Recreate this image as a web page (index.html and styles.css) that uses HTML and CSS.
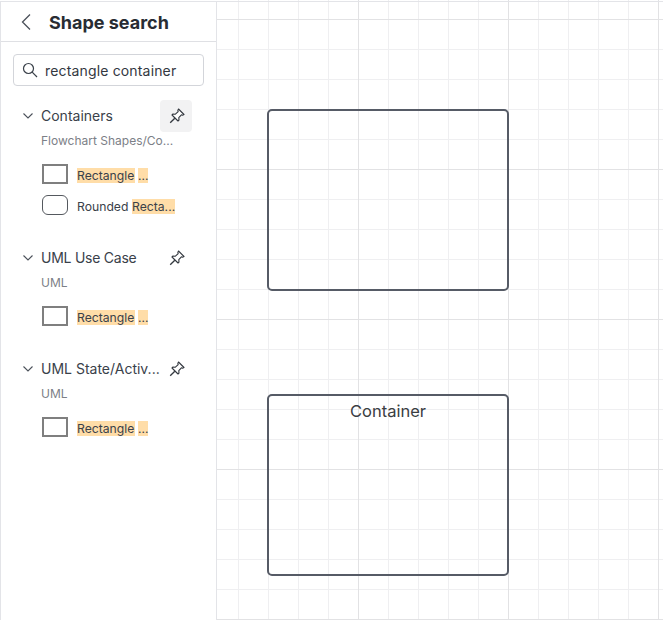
FILE: index.html
```html
<!DOCTYPE html>
<html lang="en">
<head>
<meta charset="utf-8">
<title>Shape search</title>
<link rel="stylesheet" href="styles.css">
</head>
<body>
<div class="app">
  <aside class="panel">
    <header class="panel-head">
      <svg class="back" width="12" height="18" viewBox="0 0 12 18"><path d="M10 1.500L2.500 9L10 16.500" /></svg>
      <h1>Shape search</h1>
    </header>
    <div class="search">
      <svg class="search-icon" width="16" height="16" viewBox="0 0 16 16"><circle cx="6.500" cy="6.500" r="5"/><path d="M10.200 10.200L15 15"/></svg>
      <span class="search-text">rectangle container</span>
    </div>
    <section class="group first">
      <div class="group-head">
        <svg class="chev" width="10" height="6" viewBox="0 0 10 6"><path d="M.5.500L5 5L9.500.500"/></svg>
        <span class="group-title">Containers</span>
        <span class="pin active"><svg width="16" height="16" viewBox="0 0 16 16"><path class="pin-body" d="M9.500 1L15 6.500L13.600 7.200L12.400 6.800L9.800 9.600L10 12L9 13L3 7L4 6L6.400 6.200L9.200 3.600L8.800 2.400z"/><path class="pin-stem" d="M5.800 10.200L1.200 14.800"/></svg></span>
      </div>
      <div class="group-sub">Flowchart Shapes/Co...</div>
      <div class="item"><span class="thumb"></span><span class="label"><mark class="word">Rectangle</mark><mark class="tail">...</mark></span></div>
      <div class="item"><span class="thumb round"></span><span class="label"><span class="lead">Rounded</span><mark>Recta...</mark></span></div>
    </section>
    <section class="group">
      <div class="group-head">
        <svg class="chev" width="10" height="6" viewBox="0 0 10 6"><path d="M.5.500L5 5L9.500.500"/></svg>
        <span class="group-title tight">UML Use Case</span>
        <span class="pin"><svg width="16" height="16" viewBox="0 0 16 16"><path class="pin-body" d="M9.500 1L15 6.500L13.600 7.200L12.400 6.800L9.800 9.600L10 12L9 13L3 7L4 6L6.400 6.200L9.200 3.600L8.800 2.400z"/><path class="pin-stem" d="M5.800 10.200L1.200 14.800"/></svg></span>
      </div>
      <div class="group-sub">UML</div>
      <div class="item"><span class="thumb"></span><span class="label"><mark class="word">Rectangle</mark><mark class="tail">...</mark></span></div>
    </section>
    <section class="group">
      <div class="group-head">
        <svg class="chev" width="10" height="6" viewBox="0 0 10 6"><path d="M.5.500L5 5L9.500.500"/></svg>
        <span class="group-title">UML State/Activ...</span>
        <span class="pin"><svg width="16" height="16" viewBox="0 0 16 16"><path class="pin-body" d="M9.500 1L15 6.500L13.600 7.200L12.400 6.800L9.800 9.600L10 12L9 13L3 7L4 6L6.400 6.200L9.200 3.600L8.800 2.400z"/><path class="pin-stem" d="M5.800 10.200L1.200 14.800"/></svg></span>
      </div>
      <div class="group-sub">UML</div>
      <div class="item"><span class="thumb"></span><span class="label"><mark class="word">Rectangle</mark><mark class="tail">...</mark></span></div>
    </section>
  </aside>
  <main class="canvas">
    <div class="shape shape-a"></div>
    <div class="shape shape-b"><span class="shape-title">Container</span></div>
  </main>
</div>
</body>
</html>
```
FILE: styles.css
```css
* { box-sizing: border-box; }
html, body { margin: 0; height: 100%; overflow: hidden; background: #fff; }
body { font-family: Inter, "Liberation Sans", sans-serif; color: #3a414a; }

.app { display: flex; width: 663px; height: 620px; }

.panel {
  flex: 0 0 217px;
  height: 619px;
  margin-top: 1px;
  background: #fff;
  border-left: 1px solid #e3e4e8;
  border-top: 1px solid #e3e4e8;
  border-right: 1px solid #e3e4e8;
}

.panel-head {
  display: flex;
  align-items: center;
  height: 40px;
  border-bottom: 1px solid #dfe0e4;
  padding-left: 19px;
}
.back { fill: none; stroke: #4b515a; stroke-width: 1.300; margin-right: 17px; }
.panel-head h1 { margin: 2px 0 0; font-size: 18px; font-weight: 700; color: #282c33; }

.search {
  display: flex;
  align-items: center;
  height: 32px;
  margin: 12px 12px 0 12px;
  border: 1px solid #d3d5da;
  border-radius: 4px;
  padding-left: 8px;
}
.search-icon { fill: none; stroke: #3a414a; stroke-width: 1.200; margin-right: 7px; flex: none; }
.search-text { font-size: 14px; letter-spacing: .16px; color: #33383f; }

.group { padding-left: 22px; margin-top: 20px; }
.group.first { margin-top: 14px; }

.group-head { display: flex; align-items: center; height: 32px; }
.chev { fill: none; stroke: #4b515a; stroke-width: 1.100; margin-right: 8px; flex: none; }
.group-title { font-size: 14px; color: #3a414a; width: 119px; white-space: nowrap; padding-bottom: 2px; }
.group-title.tight { letter-spacing: -.25px; }
.pin {
  display: flex;
  align-items: center;
  justify-content: center;
  width: 32px;
  height: 32px;
  padding-left: 1px;
  border-radius: 4px;
}
.pin.active { background: #f2f2f3; }
.pin-body { fill: #fff; stroke: #33383f; stroke-width: 1.100; stroke-linejoin: round; }
.pin-stem { fill: none; stroke: #33383f; stroke-width: 1.300; }

.group-sub { font-size: 12px; line-height: 18px; color: #7c8087; padding-left: 18px; height: 18px; margin-bottom: 10px; }

.item { display: flex; align-items: flex-start; height: 31px; padding-left: 19px; }
.thumb { width: 26px; height: 20px; margin-top: 4px; border: 2px solid #7f7f7f; flex: none; margin-right: 9px; }
.thumb.round { border-width: 1.500px; border-color: #55595f; border-radius: 6px; }
.label { display: flex; font-size: 12.200px; line-height: 15px; margin-top: 8px; color: #3a414a; white-space: nowrap; }
.lead { width: 55px; }
mark { background: #ffdda8; color: inherit; display: block; line-height: 15px; }
mark.word { width: 58px; }
mark.tail { margin-left: 3px; width: 10px; }

.canvas {
  flex: 1;
  height: 620px;
  position: relative;
  background-color: #fff;
  background-image:
    linear-gradient(#e3e4e8, #e3e4e8),
    linear-gradient(to right, #e2e2e4 1px, transparent 1px),
    linear-gradient(to bottom, #e2e2e4 1px, transparent 1px),
    linear-gradient(to right, #efeff1 1px, transparent 1px),
    linear-gradient(to bottom, #efeff1 1px, transparent 1px);
  background-size: 100% 1px, 150px 150px, 150px 150px, 30px 30px, 30px 30px;
  background-position: 0 1px, 141px 19px, 141px 19px, 21px 19px, 21px 19px;
  background-repeat: no-repeat, repeat, repeat, repeat, repeat;
}

.shape {
  position: absolute;
  left: 50px;
  width: 242px;
  height: 182px;
  border: 2px solid #565b66;
  border-radius: 5px;
}
.shape-a { top: 109px; }
.shape-b { top: 394px; text-align: center; }
.shape-title { font-size: 16.500px; line-height: 30px; color: #3a3d42; display: block; }
```
